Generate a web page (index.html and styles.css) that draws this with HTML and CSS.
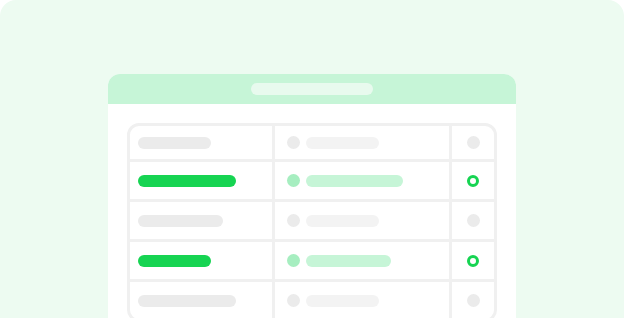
FILE: index.html
```html
<!DOCTYPE html>
<html lang="en">
  <head>
    <meta charset="UTF-8" />
    <title>Table placeholder</title>
    <link rel="stylesheet" href="styles.css">
  </head>
  <body>
    <div class="stage">
      <div class="window">
        <div class="window-bar">
          <span class="bar-title"></span>
        </div>
        <div class="window-body">
          <div class="table">
            <div class="row head">
              <div class="cell"><span class="pill gray" style="width: 73px"></span></div>
              <div class="cell"><span class="dot gray"></span><span class="pill faint" style="width: 73px"></span></div>
              <div class="cell center"><span class="dot gray"></span></div>
            </div>
            <div class="row">
              <div class="cell"><span class="pill green" style="width: 98px"></span></div>
              <div class="cell"><span class="dot mint"></span><span class="pill pale" style="width: 97px"></span></div>
              <div class="cell center"><span class="ring"></span></div>
            </div>
            <div class="row">
              <div class="cell"><span class="pill gray" style="width: 85px"></span></div>
              <div class="cell"><span class="dot gray"></span><span class="pill faint" style="width: 73px"></span></div>
              <div class="cell center"><span class="dot gray"></span></div>
            </div>
            <div class="row">
              <div class="cell"><span class="pill green" style="width: 73px"></span></div>
              <div class="cell"><span class="dot mint"></span><span class="pill pale" style="width: 85px"></span></div>
              <div class="cell center"><span class="ring"></span></div>
            </div>
            <div class="row">
              <div class="cell"><span class="pill gray" style="width: 98px"></span></div>
              <div class="cell"><span class="dot gray"></span><span class="pill faint" style="width: 73px"></span></div>
              <div class="cell center"><span class="dot gray"></span></div>
            </div>
          </div>
        </div>
      </div>
    </div>
  </body>
</html>
```

FILE: styles.css
```css
html,
body {
  margin: 0;
  height: 100%;
  overflow: hidden;
  background-color: white;
  font-family: "Liberation Sans", Arial, sans-serif;
}

.stage {
  height: 100%;
  overflow: hidden;
  background-color: #edfbf1;
  border-radius: 16px 16px 0 0;
  padding-top: 74px;
  box-sizing: border-box;
}

.window {
  width: 408px;
  margin: 0 auto;
  background-color: white;
  border-radius: 12px 12px 0 0;
  overflow: hidden;
}

.window-bar {
  height: 30px;
  background-color: #c6f5d7;
  display: flex;
  align-items: center;
  justify-content: center;
}

.bar-title {
  width: 122px;
  height: 12px;
  border-radius: 6px;
  background-color: #e8faee;
}

.window-body {
  padding: 19px 19px 0;
}

.table {
  border: 3px solid #f0f0f0;
  border-radius: 12px;
}

/* first track has no divider, the other two carry a 3px left border */
.row {
  display: grid;
  grid-template-columns: 142px 177px 1fr;
  height: 37px;
  border-top: 3px solid #f0f0f0;
}

.row.head {
  height: 33px;
  border-top: none;
}

.cell {
  display: flex;
  align-items: center;
  gap: 6px;
  padding-left: 12px;
  border-left: 3px solid #f0f0f0;
}

.cell:first-child {
  padding-left: 8px;
  border-left: none;
}

.cell.center {
  justify-content: center;
  padding-left: 0;
}

.pill {
  height: 12px;
  border-radius: 6px;
}

.pill.gray {
  background-color: #ebebeb;
}

.pill.faint {
  background-color: #f3f3f3;
}

.pill.green {
  background-color: #16d452;
}

.pill.pale {
  background-color: #c6f5d7;
}

.dot {
  width: 13px;
  height: 13px;
  border-radius: 50%;
}

.dot.gray {
  background-color: #ebebeb;
}

.dot.mint {
  background-color: #a6eec0;
}

.ring {
  width: 12px;
  height: 12px;
  border-radius: 50%;
  border: 3px solid #16d452;
  box-sizing: border-box;
}
```
